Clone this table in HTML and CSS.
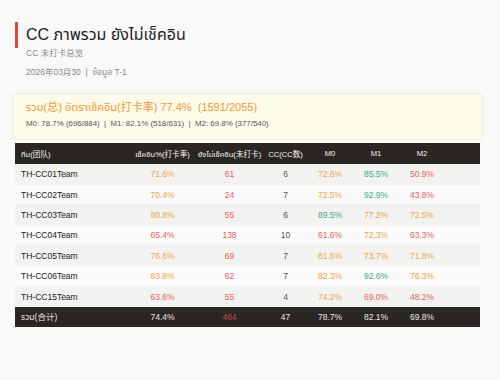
FILE: index.html
```html
<!DOCTYPE html>
<html>
<head>
<meta charset="utf-8">
<link rel="stylesheet" href="styles.css">
</head>
<body>
<div class="page">
  <h1 class="title">CC ภาพรวม ยังไม่เช็คอิน</h1>
  <div class="subtitle">CC 未打卡总览</div>
  <div class="meta">2026年03月30 &nbsp;|&nbsp; ข้อมูล T-1</div>

  <div class="summary">
    <div class="summary-main">รวม(总) อัตราเช็คอิน(打卡率) 77.4% &nbsp;(1591/2055)</div>
    <div class="summary-sub">M0: 78.7% (696/884) &nbsp;|&nbsp; M1: 82.1% (518/631) &nbsp;|&nbsp; M2: 69.8% (377/540)</div>
  </div>

  <table class="grid">
    <colgroup>
      <col class="c-team"><col class="c-rate"><col class="c-miss"><col class="c-cc"><col class="c-m"><col class="c-m"><col class="c-m"><col>
    </colgroup>
    <thead>
      <tr><th class="left">ทีม(团队)</th><th>เช็คอิน%(打卡率)</th><th>ยังไม่เช็คอิน(未打卡)</th><th>CC(CC数)</th><th>M0</th><th>M1</th><th>M2</th><th></th></tr>
    </thead>
    <tbody>
      <tr><td class="left">TH-CC01Team</td><td class="o">71.6%</td><td class="r">61</td><td class="n">6</td><td class="o">72.6%</td><td class="g">85.5%</td><td class="r">50.9%</td><td></td></tr>
      <tr><td class="left">TH-CC02Team</td><td class="o">70.4%</td><td class="r">24</td><td class="n">7</td><td class="o">72.5%</td><td class="g">92.9%</td><td class="r">43.8%</td><td></td></tr>
      <tr><td class="left">TH-CC03Team</td><td class="o">80.8%</td><td class="r">55</td><td class="n">6</td><td class="g">89.5%</td><td class="o">77.2%</td><td class="o">72.5%</td><td></td></tr>
      <tr><td class="left">TH-CC04Team</td><td class="r">65.4%</td><td class="r">138</td><td class="n">10</td><td class="r">61.6%</td><td class="o">72.3%</td><td class="r">63.3%</td><td></td></tr>
      <tr><td class="left">TH-CC05Team</td><td class="o">76.6%</td><td class="r">69</td><td class="n">7</td><td class="o">81.6%</td><td class="o">73.7%</td><td class="o">71.8%</td><td></td></tr>
      <tr><td class="left">TH-CC06Team</td><td class="o">83.8%</td><td class="r">62</td><td class="n">7</td><td class="o">82.3%</td><td class="g">92.6%</td><td class="o">76.3%</td><td></td></tr>
      <tr><td class="left">TH-CC15Team</td><td class="r">63.6%</td><td class="r">55</td><td class="n">4</td><td class="o">74.2%</td><td class="r">69.0%</td><td class="r">48.2%</td><td></td></tr>
    </tbody>
    <tfoot>
      <tr><td class="left">รวม(合计)</td><td>74.4%</td><td class="dr">464</td><td>47</td><td>78.7%</td><td>82.1%</td><td>69.8%</td><td></td></tr>
    </tfoot>
  </table>
</div>
</body>
</html>
```

FILE: styles.css
```css
* { box-sizing: border-box; }
html, body { margin: 0; padding: 0; }
body {
  background: #f9f9f8;
  font-family: "Liberation Sans", Arial, "Noto Sans Thai", "Noto Sans Thai UI", "Noto Sans CJK SC", sans-serif;
  color: #222;
  width: 500px;
  height: 380px;
  overflow: hidden;
}
.page { padding: 22px 17px 0 12px; }
.title {
  margin: 0 0 0 3px;
  border-left: 3px solid #e0483c;
  padding-left: 8px;
  font-size: 16px;
  font-weight: normal;
  line-height: 26px;
  height: 26px;
  color: #1e1e1e;
}
.subtitle {
  margin: -1px 0 0 14px;
  font-size: 8.5px;
  line-height: 12px;
  color: #888;
}
.meta {
  margin: 7px 0 0 14px;
  font-size: 8.5px;
  line-height: 12px;
  color: #888;
}
.summary {
  margin-top: 15px;
  width: 471px;
  height: 47px;
  background: #fefbea;
  border: 1px solid #efeadb;
  border-radius: 3px;
  padding: 5px 0 0 13px;
}
.summary-main {
  font-size: 11px;
  line-height: 16px;
  color: #ef9a34;
}
.summary-sub {
  margin-top: 3px;
  font-size: 7.9px;
  line-height: 11px;
  color: #555;
}
.grid {
  margin: 3px 0 0 3px;
  width: 465px;
  border-collapse: collapse;
  table-layout: fixed;
  font-size: 8.5px;
}
.c-team { width: 115px; }
.c-rate { width: 65px; }
.c-miss { width: 69px; }
.c-cc { width: 43px; }
.c-m { width: 46px; }
.grid th, .grid td {
  padding: 0;
  text-align: center;
  white-space: nowrap;
}
.grid th {
  background: #2a2624;
  color: #f4f4f4;
  font-weight: normal;
  font-size: 7.6px;
  height: 21px;
  overflow: visible;
}
.grid td { height: 20.4px; }
.grid .left { text-align: left; padding-left: 6px; }
.grid tbody tr { background: #fafafa; border-bottom: 1px solid #efefef; }
.grid tbody tr:nth-child(odd) { background: #f2f2f1; }
.grid tbody td.left { color: #222; }
.grid tfoot tr { background: #2a2624; }
.grid tfoot td { color: #e6e6e6; height: 20px; }
.o { color: #f0a548; }
.r { color: #e8625c; }
.g { color: #3dab7e; }
.n { color: #555; }
.grid tfoot td.dr { color: #c24a3e; }
```
